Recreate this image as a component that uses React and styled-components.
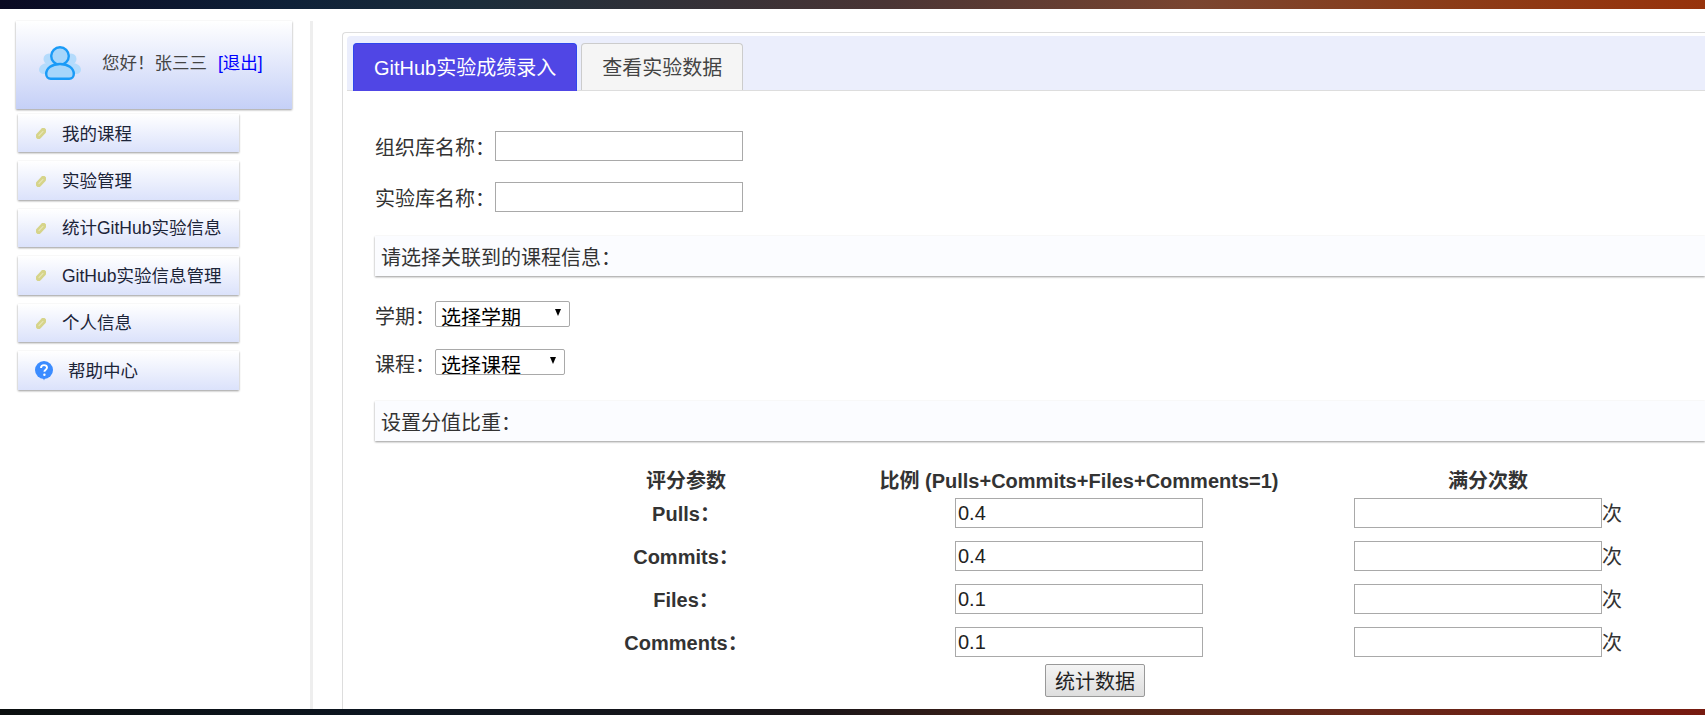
import { Fragment } from "react";
import styled, { createGlobalStyle } from "styled-components";

const GlobalStyle = createGlobalStyle`
  html, body {
    margin: 0;
    padding: 0;
    height: 100%;
    background: #fff;
    overflow: hidden;
  }
  body {
    font-family: "Liberation Sans", "Noto Sans CJK SC", sans-serif;
    font-size: 20px;
    color: #333;
  }
  * {
    box-sizing: border-box;
  }
`;

const Page = styled.div`
  height: 715px;
  display: flex;
  flex-direction: column;
  overflow: hidden;
`;

const TopBar = styled.div`
  height: 9px;
  flex: none;
  background: linear-gradient(to right, #0a0a22 0%, #0f2138 17%, #1c2d3a 28%, #4a3535 52%, #7a4530 70%, #8b3c18 85%, #97330c 100%);
`;

const BottomBar = styled.div`
  height: 6px;
  flex: none;
  background: linear-gradient(to right, #0b0f0f 0%, #0c1520 22%, #1a1518 48%, #4d2518 65%, #66281a 80%, #771a10 100%);
`;

const Main = styled.div`
  flex: 1;
  min-height: 0;
  display: flex;
  padding-top: 12px;
`;

const Sidebar = styled.aside`
  width: 313px;
  flex: none;
  padding-left: 16px;
  border-right: 3px solid #eee;
  display: flex;
  flex-direction: column;
  align-items: flex-start;
`;

const Profile = styled.div`
  width: 276px;
  height: 88px;
  display: flex;
  align-items: center;
  padding: 0 0 4px 23px;
  font-size: 17.5px;
  color: #444;
  background: linear-gradient(to bottom, #fff 0%, #c5d0f7 100%);
  box-shadow: 0 1px 2px #999;
`;

const ProfileText = styled.span`
  margin: 0 0 4px 21px;
  white-space: pre;
`;

const Logout = styled.a`
  color: #00f;
  margin-left: 11px;
  text-decoration: none;
`;

const Menu = styled.ul`
  list-style: none;
  margin: 5px 0 0 2px;
  padding: 0;
  display: flex;
  flex-direction: column;
  gap: 9px;
`;

const MenuItem = styled.li`
  width: 221px;
  height: ${(props) => (props.$help ? "39px" : "38.4px")};
  display: flex;
  align-items: center;
  padding: 0 0 2px ${(props) => (props.$help ? "17px" : "18px")};
  gap: ${(props) => (props.$help ? "15px" : "16px")};
  font-size: 17.5px;
  color: #1c2438;
  background: linear-gradient(to bottom, #fff 0%, #dbe2fb 100%);
  box-shadow: 0 1px 2px #999;
`;

const Content = styled.main`
  flex: 1;
  min-width: 0;
  margin: 11px 0 0 29px;
  border: 1px solid #ddd;
  border-right: 0;
  border-bottom: 0;
  border-top-left-radius: 4px;
  padding: 3px 0 0 4px;
`;

const TabBar = styled.div`
  height: 55px;
  display: flex;
  align-items: flex-end;
  gap: 4px;
  padding-left: 6px;
  background: #ebeefc;
  border-bottom: 1px solid #ddd;
  border-radius: 4px 0 0 0;
`;

const Tab = styled.div`
  height: ${(props) => (props.$active ? "48px" : "47px")};
  margin-bottom: ${(props) => (props.$active ? "-1px" : "0")};
  padding: 0 20px 2px;
  display: flex;
  align-items: center;
  border: 1px solid ${(props) => (props.$active ? "#2f46ee" : "#ccc")};
  border-bottom: ${(props) => (props.$active ? "1px solid #5046e5" : "0")};
  border-radius: 4px 4px 0 0;
  background: ${(props) => (props.$active ? "#5046e5" : "#f5f5f5")};
  color: ${(props) => (props.$active ? "#fff" : "#444")};
`;

const Form = styled.form`
  padding: 40px 0 0 28px;
  display: flex;
  flex-direction: column;
`;

const FieldRow = styled.div`
  height: ${(props) => props.$height}px;
  display: flex;
  align-items: center;
  margin-bottom: ${(props) => props.$gap}px;
`;

const FieldLabel = styled.label`
  white-space: nowrap;
`;

const SelectLabel = styled(FieldLabel)`
  padding-top: 3px;
`;

const TextInput = styled.input`
  width: 248px;
  height: 30px;
  padding: 0 2px;
  border: 1px solid #a9a9a9;
  background: #fff;
  font: inherit;
  color: #222;
  outline: none;
  flex: none;
`;

const SectionBar = styled.div`
  height: 40px;
  flex: none;
  display: flex;
  align-items: center;
  padding-left: 6px;
  background: #fbfcff;
  box-shadow: 0 1px 2px #999;
  margin-bottom: ${(props) => props.$gap}px;
`;

const SelectWrap = styled.div`
  position: relative;
  width: ${(props) => props.$width}px;
  height: 26px;
  &::after {
    content: "";
    position: absolute;
    top: 8px;
    right: 9px;
    border-left: 3.5px solid transparent;
    border-right: 3.5px solid transparent;
    border-top: 7px solid #000;
    pointer-events: none;
  }
`;

const Select = styled.select`
  appearance: none;
  display: block;
  width: 100%;
  height: 100%;
  padding: 5px 0 0 5px;
  border: 1px solid #a9a9a9;
  border-radius: 2px;
  background: #fff;
  font: inherit;
  color: #000;
`;

const ScoreTable = styled.div`
  display: grid;
  grid-template-columns: 352px 434px 384px;
  grid-template-rows: 28px 43px 43px 43px 37px 33px;
  margin: 29px 0 0 135px;
  width: 1168px;
`;

const HeadCell = styled.div`
  font-weight: bold;
  line-height: 23px;
  text-align: center;
  white-space: nowrap;
`;

const RowLabel = styled.div`
  font-weight: bold;
  text-align: center;
  line-height: 32px;
`;

const Cell = styled.div`
  display: flex;
  justify-content: center;
  align-items: flex-start;
`;

const Unit = styled.span`
  line-height: 32px;
`;

const SubmitButton = styled.button`
  grid-column: 1 / -1;
  justify-self: center;
  width: 100px;
  height: 33px;
  padding: 0;
  border: 1px solid #999;
  border-radius: 2px;
  background: linear-gradient(to bottom, #f4f4f4, #dedede);
  font: inherit;
  color: #222;
`;

const PencilSvg = styled.svg`
  flex: none;
  margin-top: 3px;
`;

const HelpSvg = styled.svg`
  flex: none;
  margin-top: 4px;
`;

const UserIcon = () => (
  <svg width="42" height="34" viewBox="0 0 42 34">
    <g fill="#b4dbfc">
      <circle cx="10" cy="13" r="5.500" />
      <circle cx="32" cy="13" r="5.500" />
      <path d="M0 24c0-4 4-7 9-7h24c5 0 9 3 9 7 0 2-2 4-5 4H5c-3 0-5-2-5-4z" />
    </g>
    <circle cx="21" cy="10" r="8.800" fill="#a6d6fb" stroke="#1a9bf7" strokeWidth="2.400" />
    <path
      d="M7.200 28c0-6 5.800-10 13.800-10s13.800 4 13.800 10c0 3-2 4.800-4.500 4.800H11.700c-2.500 0-4.500-1.800-4.500-4.800z"
      fill="#a6d6fb"
      stroke="#1a9bf7"
      strokeWidth="2.400"
    />
  </svg>
);

const PencilIcon = () => (
  <PencilSvg width="10" height="11" viewBox="0 0 10 11">
    <rect x="-1.500" y="2.500" width="13" height="6" rx="3" fill="#d6d48a" transform="rotate(-48 5 5.500)" />
    <path d="M3 7.500L7 3.400" stroke="#e6e5b4" strokeWidth="1.200" strokeLinecap="round" />
  </PencilSvg>
);

const HelpIcon = () => (
  <HelpSvg width="18" height="20" viewBox="0 0 18 20">
    <circle cx="9" cy="9" r="9" fill="#3b8cff" />
    <path d="M8 17h2l-1 2.500z" fill="#3b8cff" />
    <path
      d="M6 7c0-1.800 1.300-2.900 3-2.900s3 1 3 2.500c0 2.200-2.600 2.200-2.600 4.200"
      fill="none"
      stroke="#fff"
      strokeWidth="1.900"
    />
    <circle cx="9.400" cy="13.700" r="1.200" fill="#fff" />
  </HelpSvg>
);

const menuItems = ["我的课程", "实验管理", "统计GitHub实验信息", "GitHub实验信息管理", "个人信息"];

const scoreRows = [
  { name: "Pulls", ratio: "0.4" },
  { name: "Commits", ratio: "0.4" },
  { name: "Files", ratio: "0.1" },
  { name: "Comments", ratio: "0.1" },
];

const App = () => {
  return (
    <Page>
      <GlobalStyle />
      <TopBar />
      <Main>
        <Sidebar>
          <Profile>
            <UserIcon />
            <ProfileText>
              您好！张三三
              <Logout href="#">[退出]</Logout>
            </ProfileText>
          </Profile>
          <Menu>
            {menuItems.map((item) => (
              <MenuItem key={item}>
                <PencilIcon />
                {item}
              </MenuItem>
            ))}
            <MenuItem $help>
              <HelpIcon />
              帮助中心
            </MenuItem>
          </Menu>
        </Sidebar>
        <Content>
          <TabBar>
            <Tab $active>GitHub实验成绩录入</Tab>
            <Tab>查看实验数据</Tab>
          </TabBar>
          <Form>
            <FieldRow $height={30} $gap={21}>
              <FieldLabel>组织库名称：</FieldLabel>
              <TextInput />
            </FieldRow>
            <FieldRow $height={30} $gap={24}>
              <FieldLabel>实验库名称：</FieldLabel>
              <TextInput />
            </FieldRow>
            <SectionBar $gap={25}>请选择关联到的课程信息：</SectionBar>
            <FieldRow $height={26} $gap={22}>
              <SelectLabel>学期：</SelectLabel>
              <SelectWrap $width={135}>
                <Select>
                  <option>选择学期</option>
                </Select>
              </SelectWrap>
            </FieldRow>
            <FieldRow $height={26} $gap={26}>
              <SelectLabel>课程：</SelectLabel>
              <SelectWrap $width={130}>
                <Select>
                  <option>选择课程</option>
                </Select>
              </SelectWrap>
            </FieldRow>
            <SectionBar $gap={0}>设置分值比重：</SectionBar>
            <ScoreTable>
              <HeadCell>评分参数</HeadCell>
              <HeadCell>比例 (Pulls+Commits+Files+Comments=1)</HeadCell>
              <HeadCell>满分次数</HeadCell>
              {scoreRows.map((row) => (
                <Fragment key={row.name}>
                  <RowLabel>{row.name}：</RowLabel>
                  <Cell>
                    <TextInput defaultValue={row.ratio} />
                  </Cell>
                  <Cell>
                    <TextInput />
                    <Unit>次</Unit>
                  </Cell>
                </Fragment>
              ))}
              <SubmitButton type="button">统计数据</SubmitButton>
            </ScoreTable>
          </Form>
        </Content>
      </Main>
      <BottomBar />
    </Page>
  );
};

export default App;
